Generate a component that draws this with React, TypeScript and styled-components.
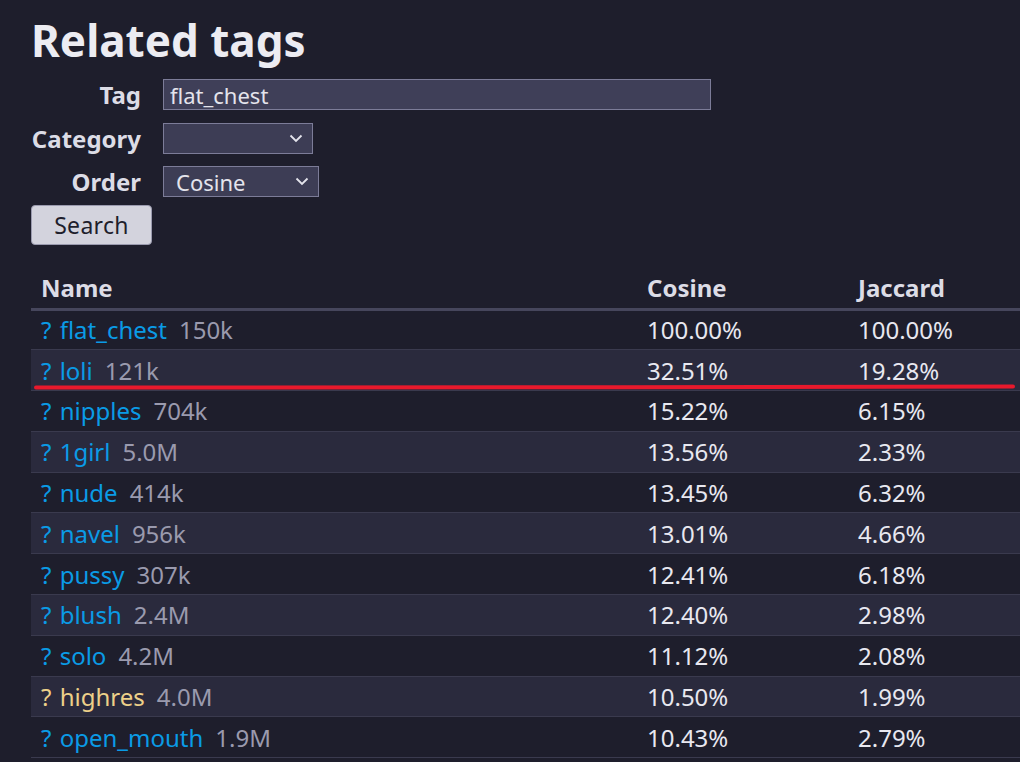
import React from "react";
import styled, { createGlobalStyle } from "styled-components";

type TagRow = {
    name: string,
    count: string,
    cosine: string,
    jaccard: string,
    meta?: boolean
}

const rows: TagRow[] = [
    { name: "flat_chest", count: "150k", cosine: "100.00%", jaccard: "100.00%" },
    { name: "loli", count: "121k", cosine: "32.51%", jaccard: "19.28%" },
    { name: "nipples", count: "704k", cosine: "15.22%", jaccard: "6.15%" },
    { name: "1girl", count: "5.0M", cosine: "13.56%", jaccard: "2.33%" },
    { name: "nude", count: "414k", cosine: "13.45%", jaccard: "6.32%" },
    { name: "navel", count: "956k", cosine: "13.01%", jaccard: "4.66%" },
    { name: "pussy", count: "307k", cosine: "12.41%", jaccard: "6.18%" },
    { name: "blush", count: "2.4M", cosine: "12.40%", jaccard: "2.98%" },
    { name: "solo", count: "4.2M", cosine: "11.12%", jaccard: "2.08%" },
    { name: "highres", count: "4.0M", cosine: "10.50%", jaccard: "1.99%", meta: true },
    { name: "open_mouth", count: "1.9M", cosine: "10.43%", jaccard: "2.79%" },
]

const GlobalStyle = createGlobalStyle`
    html, body {
        margin: 0;
        padding: 0;
        background: #1e1e2c;
        overflow: hidden;
    }
    body {
        font-family: "Noto Sans", "DejaVu Sans", sans-serif;
        color: #e4e4ec;
    }
`

const Page = styled.div`
    position: relative;
    padding: 10px 0 0 31px;
    width: 1100px;
`

const Title = styled.h1`
    margin: 0;
    font-size: 44px;
    line-height: 60px;
    font-weight: 700;
    color: #ececf2;
`

const Form = styled.form`
    display: grid;
    grid-template-columns: 110px auto;
    column-gap: 22px;
    row-gap: 12.5px;
    align-items: center;
    justify-items: start;
    margin-top: 9px;
`

const Label = styled.label`
    justify-self: end;
    font-size: 24px;
    font-weight: 700;
    line-height: 31px;
    color: #dcdce6;
`

const TextInput = styled.input`
    box-sizing: border-box;
    width: 548px;
    height: 31px;
    margin: 0;
    padding: 0 6px;
    font-family: "Noto Sans", sans-serif;
    font-size: 22px;
    color: #e4e4ec;
    background: #3f3f58;
    border: 1px solid #7c7c98;
    outline: none;
`

const SelectWrap = styled.div<{ width: number }>`
    position: relative;
    width: ${props => props.width}px;
    height: 31px;
`

const Select = styled.select`
    appearance: none;
    box-sizing: border-box;
    width: 100%;
    height: 31px;
    margin: 0;
    padding: 0 0 0 12px;
    font-family: "Noto Sans", sans-serif;
    font-size: 22px;
    color: #e4e4ec;
    background: #3d3d55;
    border: 1px solid #7c7c98;
    border-radius: 0;
    outline: none;
`

const Chevron = styled.svg`
    position: absolute;
    right: 10px;
    top: 11px;
    pointer-events: none;
`

const SearchButton = styled.button`
    grid-column: 1 / 3;
    box-sizing: border-box;
    width: 121px;
    height: 40px;
    margin-top: -5px;
    font-family: "Noto Sans", sans-serif;
    font-size: 23px;
    letter-spacing: 0.3px;
    color: #1e1e2c;
    background: #d3d3dd;
    border: 1px solid #9a9aae;
    border-radius: 4px;
`

const Table = styled.table`
    margin-top: 22px;
    width: 1060px;
    border-collapse: collapse;
    font-size: 24px;
`

const HeadCell = styled.th<{ width?: number }>`
    text-align: left;
    font-weight: 700;
    padding: 0 10px;
    height: 41px;
    color: #dcdce6;
    border-bottom: 3px solid #46465c;
    width: ${props => props.width ? props.width + "px" : "auto"};
`

const Row = styled.tr<{ alt?: boolean }>`
    background: ${props => props.alt ? "#2a2a3d" : "transparent"};
`

const Cell = styled.td`
    box-sizing: border-box;
    padding: 0 10px;
    height: 40.8px;
    white-space: nowrap;
    color: #e8e8f0;
    border-bottom: 1px solid #3a3a4e;
`

const TagLink = styled.span<{ meta?: boolean }>`
    color: ${props => props.meta ? "#edd089" : "#0a9be6"};
    word-spacing: 2px;
`

const Count = styled.span`
    margin-left: 12px;
    color: #9a9aae;
`

const Annotation = styled.svg`
    position: absolute;
    left: 0;
    top: 0;
    pointer-events: none;
`

function ChevronIcon() {
    return (
        <Chevron width="14" height="9" viewBox="0 0 14 9">
            <path d="M1.5 1.5 L7 7 L12.5 1.5" fill="none" stroke="#e4e4ec" strokeWidth="1.8" />
        </Chevron>
    )
}

export default function App() {
    return (
        <>
            <GlobalStyle />
            <Page>
                <Title>Related tags</Title>
                <Form onSubmit={e => e.preventDefault()}>
                    <Label>Tag</Label>
                    <TextInput defaultValue="flat_chest" />
                    <Label>Category</Label>
                    <SelectWrap width={150}>
                        <Select defaultValue="">
                            <option value=""></option>
                        </Select>
                        <ChevronIcon />
                    </SelectWrap>
                    <Label>Order</Label>
                    <SelectWrap width={156}>
                        <Select defaultValue="cosine">
                            <option value="cosine">Cosine</option>
                        </Select>
                        <ChevronIcon />
                    </SelectWrap>
                    <SearchButton type="submit">Search</SearchButton>
                </Form>
                <Table>
                    <thead>
                        <tr>
                            <HeadCell width={586}>Name</HeadCell>
                            <HeadCell width={191}>Cosine</HeadCell>
                            <HeadCell>Jaccard</HeadCell>
                        </tr>
                    </thead>
                    <tbody>
                        {rows.map((r, i) => (
                            <Row key={r.name} alt={i % 2 === 1}>
                                <Cell>
                                    <TagLink meta={r.meta}>? {r.name}</TagLink>
                                    <Count>{r.count}</Count>
                                </Cell>
                                <Cell>{r.cosine}</Cell>
                                <Cell>{r.jaccard}</Cell>
                            </Row>
                        ))}
                    </tbody>
                </Table>
                <Annotation width="1020" height="762">
                    <path d="M36 387.5 C 300 388, 700 387, 1013 386.5" fill="none" stroke="#e8192c" strokeWidth="4" strokeLinecap="round" />
                </Annotation>
            </Page>
        </>
    )
}
